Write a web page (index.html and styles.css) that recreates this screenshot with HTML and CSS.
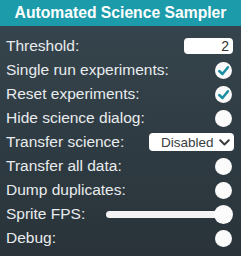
FILE: index.html
```html
<!DOCTYPE html>
<html lang="en">
<head>
    <meta charset="UTF-8">
    <meta name="viewport" content="width=device-width, initial-scale=1.0">
    <title>Automated Science Sampler</title>
    <link rel="stylesheet" href="styles.css">
</head>
<body>
    <div class="panel">
        <div class="title">Automated Science Sampler</div>
        <div class="rows">
            <div class="row">
                <span>Threshold:</span>
                <div class="numberBox">2</div>
            </div>
            <div class="row">
                <span>Single run experiments:</span>
                <div class="toggle">
                    <svg viewBox="0 0 16 16" width="17" height="17"><polyline points="4,8.5 7,11.3 12.2,5" fill="none" stroke="#1a8fa3" stroke-width="2.4" stroke-linecap="round" stroke-linejoin="round"/></svg>
                </div>
            </div>
            <div class="row">
                <span>Reset experiments:</span>
                <div class="toggle">
                    <svg viewBox="0 0 16 16" width="17" height="17"><polyline points="4,8.5 7,11.3 12.2,5" fill="none" stroke="#1a8fa3" stroke-width="2.4" stroke-linecap="round" stroke-linejoin="round"/></svg>
                </div>
            </div>
            <div class="row">
                <span>Hide science dialog:</span>
                <div class="toggle"></div>
            </div>
            <div class="row">
                <span>Transfer science:</span>
                <div class="dropdown">
                    <span>Disabled</span>
                    <svg viewBox="0 0 11 7" width="11" height="7"><polyline points="1.2,1.2 5.5,5.5 9.8,1.2" fill="none" stroke="#3a3d40" stroke-width="2" stroke-linecap="round" stroke-linejoin="round"/></svg>
                </div>
            </div>
            <div class="row">
                <span>Transfer all data:</span>
                <div class="toggle"></div>
            </div>
            <div class="row">
                <span>Dump duplicates:</span>
                <div class="toggle"></div>
            </div>
            <div class="row">
                <span>Sprite FPS:</span>
                <div class="slider">
                    <div class="track"></div>
                    <div class="knob"></div>
                </div>
            </div>
            <div class="row">
                <span>Debug:</span>
                <div class="toggle"></div>
            </div>
        </div>
    </div>
</body>
</html>
```

FILE: styles.css
```css
body {
    margin: 0;
    width: 241px;
    height: 256px;
    overflow: hidden;
    font-family: 'Liberation Sans', Arial, sans-serif;
    background: #2a343a;
}
.panel {
    height: 256px;
    background: linear-gradient(#37464f, #293339);
    color: #e8ecee;
}
.title {
    height: 26px;
    line-height: 26px;
    background: #1c9cab;
    color: #fff;
    font-weight: bold;
    font-size: 15.7px;
    text-align: center;
}
.rows {
    padding: 8px 8px 0 6px;
}
.row {
    display: flex;
    justify-content: space-between;
    align-items: center;
    height: 24px;
    font-size: 15.5px;
}
.numberBox {
    width: 45px;
    height: 16px;
    line-height: 17px;
    padding-right: 4px;
    background: #fff;
    border-radius: 4px;
    color: #333;
    font-size: 14px;
    text-align: right;
}
.toggle {
    width: 17px;
    height: 17px;
    margin-right: 1px;
    border-radius: 50%;
    background: #fbfbfb;
    display: flex;
}
.dropdown {
    display: flex;
    align-items: center;
    gap: 5px;
    width: 73px;
    height: 18px;
    padding-left: 12px;
    margin-right: -1px;
    background: #fff;
    border-radius: 4px;
    color: #3a3d40;
    font-size: 13.5px;
}
.slider {
    position: relative;
    width: 127px;
    height: 19px;
    display: flex;
    align-items: center;
}
.track {
    width: 118px;
    height: 7px;
    background: #f4f4f4;
    border-radius: 4px;
}
.knob {
    position: absolute;
    right: 0;
    top: 0;
    width: 19px;
    height: 19px;
    border-radius: 50%;
    background: #fbfbfb;
}
```
